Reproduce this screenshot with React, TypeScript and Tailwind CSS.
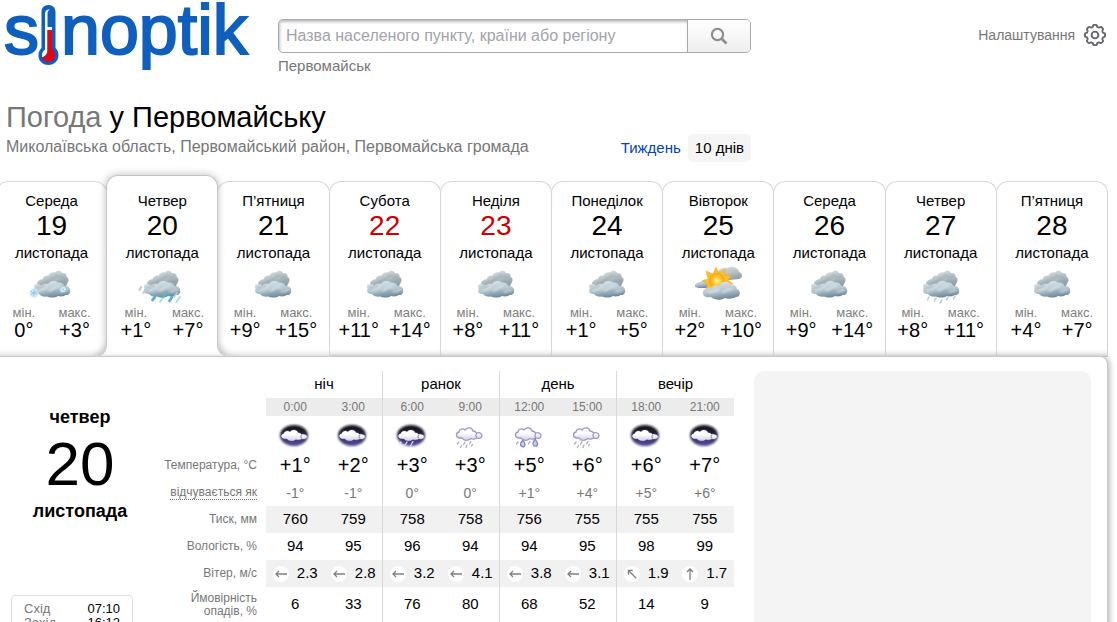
import type { ReactNode } from "react";
import { clsx } from "clsx";

type DayIconKind = "cloudy" | "snow" | "rain" | "drizzle" | "sun";
type HourIconKind = "night" | "night-rain" | "rain" | "heavy-rain";

const days: {
  name: string;
  date: number;
  icon: DayIconKind;
  min: string;
  max: string;
  weekend?: boolean;
}[] = [
  { name: "Середа", date: 19, icon: "snow", min: "0°", max: "+3°" },
  { name: "Четвер", date: 20, icon: "rain", min: "+1°", max: "+7°" },
  { name: "П’ятниця", date: 21, icon: "cloudy", min: "+9°", max: "+15°" },
  { name: "Субота", date: 22, icon: "cloudy", min: "+11°", max: "+14°", weekend: true },
  { name: "Неділя", date: 23, icon: "cloudy", min: "+8°", max: "+11°", weekend: true },
  { name: "Понеділок", date: 24, icon: "cloudy", min: "+1°", max: "+5°" },
  { name: "Вівторок", date: 25, icon: "sun", min: "+2°", max: "+10°" },
  { name: "Середа", date: 26, icon: "cloudy", min: "+9°", max: "+14°" },
  { name: "Четвер", date: 27, icon: "drizzle", min: "+8°", max: "+11°" },
  { name: "П’ятниця", date: 28, icon: "cloudy", min: "+4°", max: "+7°" },
];

const periods = ["ніч", "ранок", "день", "вечір"];

const hours: {
  time: string;
  icon: HourIconKind;
  temp: string;
  feels: string;
  pressure: number;
  humidity: number;
  wind: string;
  angle: number;
  chance: number;
}[] = [
  { time: "0:00", icon: "night", temp: "+1°", feels: "-1°", pressure: 760, humidity: 94, wind: "2.3", angle: 0, chance: 6 },
  { time: "3:00", icon: "night", temp: "+2°", feels: "-1°", pressure: 759, humidity: 95, wind: "2.8", angle: 0, chance: 33 },
  { time: "6:00", icon: "night-rain", temp: "+3°", feels: "0°", pressure: 758, humidity: 96, wind: "3.2", angle: 0, chance: 76 },
  { time: "9:00", icon: "rain", temp: "+3°", feels: "0°", pressure: 758, humidity: 94, wind: "4.1", angle: 0, chance: 80 },
  { time: "12:00", icon: "heavy-rain", temp: "+5°", feels: "+1°", pressure: 756, humidity: 94, wind: "3.8", angle: 0, chance: 68 },
  { time: "15:00", icon: "rain", temp: "+6°", feels: "+4°", pressure: 755, humidity: 95, wind: "3.1", angle: 0, chance: 52 },
  { time: "18:00", icon: "night", temp: "+6°", feels: "+5°", pressure: 755, humidity: 98, wind: "1.9", angle: 45, chance: 14 },
  { time: "21:00", icon: "night", temp: "+7°", feels: "+6°", pressure: 755, humidity: 99, wind: "1.7", angle: 90, chance: 9 },
];

// Gradients shared by all weather icons
function IconDefs() {
  return (
    <svg width="0" height="0" className="absolute" aria-hidden="true">
      <defs>
        <linearGradient id="cloudBack" x1="0" y1="0" x2="0.4" y2="1">
          <stop offset="0" stopColor="#dde4e5" />
          <stop offset="0.5" stopColor="#bac6ca" />
          <stop offset="1" stopColor="#8fa0a9" />
        </linearGradient>
        <linearGradient id="cloudFront" x1="0.2" y1="0" x2="0.5" y2="1">
          <stop offset="0" stopColor="#dfe7ea" />
          <stop offset="0.55" stopColor="#b6c6cf" />
          <stop offset="1" stopColor="#6b8699" />
        </linearGradient>
        <radialGradient id="sunFill">
          <stop offset="0" stopColor="#fff3a0" />
          <stop offset="0.6" stopColor="#fdc32a" />
          <stop offset="1" stopColor="#f3a418" />
        </radialGradient>
        <linearGradient id="nightSky" x1="0" y1="0" x2="0" y2="1">
          <stop offset="0" stopColor="#101014" />
          <stop offset="0.4" stopColor="#232138" />
          <stop offset="1" stopColor="#5850a4" />
        </linearGradient>
        <linearGradient id="smallCloud" x1="0" y1="0" x2="0" y2="1">
          <stop offset="0.4" stopColor="#ffffff" />
          <stop offset="1" stopColor="#d3d0e6" />
        </linearGradient>
        <filter id="soft" x="-20%" y="-20%" width="140%" height="140%">
          <feGaussianBlur stdDeviation="1.3" />
        </filter>
        <filter id="softer" x="-20%" y="-20%" width="140%" height="140%">
          <feGaussianBlur stdDeviation="0.8" />
        </filter>
      </defs>
    </svg>
  );
}

function Clouds() {
  return (
    <g>
      <path
        d="M9 18.500C9 15 12 13.500 15 13C15 10.500 18 9 20.500 9.500C22 6.500 25 6 27 6.500C29 4 33 4.500 34 7C37 6.500 39 8.500 38.500 10.500C41 12 41 15 39.500 17L38 20L12 22C10 22 8.500 20.500 9 18.500Z"
        fill="url(#cloudBack)"
      />
      <path
        d="M14 18C19 17 22 12 28 11M27 9C30 10.500 34 10.500 37 11M31 15C35 16 37 16 39 14"
        fill="none"
        stroke="#81949e"
        strokeWidth="1.500"
        opacity="0.500"
        filter="url(#softer)"
      />
      <path
        d="M6 19C8 17.500 11 18 13 19.500C15 17.500 18 17.500 20 18C22 14.500 27 14 30 16.500C33 16 36 18 36.500 20C40 19.500 42 21.500 42 24C43 27 40.500 29.500 37.500 29C35 31 31.500 30.500 30 30C27 32 22 32 19 30.500C16 31 12 30 11 28C8 28 6 27 6 25C7 23 6 21 6 19Z"
        fill="url(#cloudFront)"
      />
      <path
        d="M10 25C14 24 16 21 20 21M21 25C25 24 27 20 32 20M32 26C35 26 37 24 40 24"
        fill="none"
        stroke="#f4f8fa"
        strokeWidth="2"
        opacity="0.450"
        filter="url(#softer)"
      />
      <path
        d="M8 22C12 22 14 20 17 20M18 28C23 29 26 27 29 24"
        fill="none"
        stroke="#7f95a3"
        strokeWidth="1.400"
        opacity="0.450"
        filter="url(#softer)"
      />
    </g>
  );
}

function Sun() {
  return (
    <g>
      <path
        d="M23 8C24 3 28 1 33 2C38 -1 45 2 45 6C49 7 49 12 45 13L26 15Z"
        fill="url(#cloudBack)"
      />
      <path d="M1 19C2 16 6 17 9 14C13 12 17 14 20 18L16 22H6C3 22 0 21 1 19Z" fill="url(#cloudFront)" />
      <path
        d="M22 1L25 7L31 3L31 10L38 9L34 14L39 18L33 19L33 26L27 22L22 28L19 22L11 25L14 18L8 15L14 13L12 5L19 8Z"
        fill="#fbbf2a"
        stroke="#f2ab1c"
        strokeWidth="0.500"
      />
      <circle cx="23" cy="15" r="8" fill="url(#sunFill)" />
      <path
        d="M9 26C9 22 14 22 17 22C18 19 23 19 25 20C27 15 34 14 37 19C40 18 43 21 43 23C47 24 47 31 42 31C38 33 34 33 31 32C27 35 20 34 17 31C12 32 8 30 9 26Z"
        fill="url(#cloudFront)"
      />
      <path
        d="M14 26C18 27 21 24 25 24M28 27C32 26 34 22 38 23"
        fill="none"
        stroke="#fff"
        strokeWidth="1.800"
        opacity="0.500"
        filter="url(#softer)"
      />
    </g>
  );
}

function DayIcon({ kind }: { kind: DayIconKind }) {
  return (
    <svg viewBox="0 -1 48 40" width="48" height="40" className="mx-auto block overflow-visible" aria-hidden="true">
      {kind === "sun" ? <Sun /> : <Clouds />}
      {kind === "snow" && (
        <g stroke="#8cc9ea" strokeWidth="1" strokeLinecap="round">
          <circle cx="6" cy="27" r="4.500" fill="#cdebf8" stroke="none" opacity="0.900" />
          <path d="M6 23.500V30.500M3 25.500L9 28.500M3 28.500L9 25.500" />
          <circle cx="35" cy="23.500" r="2.600" fill="#eefaff" stroke="none" opacity="0.900" />
          <path d="M35 22V25M33.500 23L36.500 24.500" strokeWidth="0.800" />
        </g>
      )}
      {kind === "rain" && (
        <g strokeLinecap="round" fill="none">
          <path d="M3 21L1.500 24M7 24L5.500 27" stroke="#bccbd6" strokeWidth="2" />
          <path d="M28 27L25 31M17 31L14.500 34M34 31L31.500 35" stroke="#52b6d5" strokeWidth="2.800" />
          <path d="M42 31L38.500 36M24 33L22 36M39 27L36 31" stroke="#a6d8e8" strokeWidth="1.800" />
        </g>
      )}
      {kind === "drizzle" && (
        <g strokeLinecap="round" fill="none" stroke="#b7cbd6" strokeWidth="1.500">
          <path d="M12 31L10.500 34M19 32L17.500 35M31 31L29.500 34M38 30L36.500 33M25 34L23 37" />
        </g>
      )}
    </svg>
  );
}

function HourIcon({ kind }: { kind: HourIconKind }) {
  const night = kind === "night" || kind === "night-rain";
  return (
    <svg viewBox="0 -2 34 28" width="34" height="28" className="mx-auto block overflow-visible" aria-hidden="true">
      {night && <ellipse cx="16" cy="13.500" rx="14" ry="10.500" fill="url(#nightSky)" filter="url(#soft)" />}
      <path
        d="M7 16C3 16 2 11 6 10C6 7 10 6 12 8C14 5 19 5 20 9C22 9 23 10 23.500 11C25 10 29 11 29 13.500C29 16 26 17 24 16C22 17 20 18 18 16.500C15 19 11 19 9 16Z"
        fill="url(#smallCloud)"
        stroke={night ? "#e4e3f1" : "#9d98c6"}
        strokeWidth={night ? 0.3 : 1.3}
        transform={night ? "translate(0 3) scale(1 0.86)" : undefined}
      />
      <path
        d="M24 11.500C22.500 12.500 22.500 14.500 24 15.500"
        fill="none"
        stroke="#9691bb"
        strokeWidth="1.100"
        transform={night ? "translate(0 3) scale(1 0.86)" : undefined}
      />
      {kind !== "night" && (
        <g fill="none" stroke={night ? "#e0dfff" : "#aeabc0"} strokeWidth="1.300" strokeLinecap="round">
          <path d="M6 20L4.500 22M12 20L10.500 22.500M18 19.500L16.500 22" />
          {kind === "night-rain" && <path d="M9 23L8 25M16 23L15 25" />}
          {kind === "rain" && <path d="M8.500 23.500L7.500 25.500M14 23L13 25.500M19.500 22.500L18.500 24" />}
        </g>
      )}
      {kind === "heavy-rain" && (
        <g fill="#c3cdf7" stroke="#7f84c6" strokeWidth="1.200">
          <path d="M11 18C9.500 20 8 21 8.500 23C9.500 25.500 13 25.500 13 22.500C13 20.500 11 20 11 18Z" />
          <path d="M23.500 17C21.500 19 20.500 20.500 21 22.500C22 25 26 24.500 25.500 21.500C25.500 20 23.500 19 23.500 17Z" />
        </g>
      )}
    </svg>
  );
}

function Logo() {
  return (
    <a href="#" aria-label="sinoptik" className="block">
      <svg viewBox="0 0 250 72" width="250" height="72" className="overflow-visible" aria-hidden="true">
        <g
          fill="#0f5fbe"
          stroke="#0f5fbe"
          strokeWidth="2"
          fontSize="70"
          className="font-['Liberation_Sans',Arial,sans-serif]"
        >
          <text x="-2" y="54">s</text>
          <text x="55" y="54">noptik</text>
        </g>
        <path
          d="M42.500 5C47 5 49.500 8 49.500 12V48C55 53 53 65 42.500 65C32 65 30 53 35.500 48V12C35.500 8 38 5 42.500 5Z"
          fill="#0f5fbe"
        />
        <path
          d="M39 14C39 10.500 41 9 44 9.500C42 10.500 41.500 12 41.500 14V50C41.500 54 39.500 56.500 36 57C35.500 53.500 37 51 39 49.500Z"
          fill="#ffffff"
        />
        <path d="M41 27H46V30H41Z" fill="#ffffff" />
        <path
          d="M41.500 30H46V49C51.500 53 49.500 62 42.500 62C39.500 62 37 60 36 57.500C39.500 57 41.500 54 41.500 50Z"
          fill="#e10613"
        />
      </svg>
    </a>
  );
}

function gearPath() {
  const points: string[] = [];
  for (let i = 0; i < 160; i++) {
    const a = (i / 160) * Math.PI * 2;
    const r = 9.2 + 0.95 * Math.tanh(2.4 * Math.cos(8 * a) + 0.3);
    points.push(`${(12 + r * Math.cos(a)).toFixed(2)} ${(12 + r * Math.sin(a)).toFixed(2)}`);
  }
  return `M${points.join("L")}Z`;
}

function Header() {
  return (
    <header className="flex items-start pl-[6px]">
      <div className="w-[272px] shrink-0">
        <Logo />
      </div>
      <div className="w-[473px]">
        <form className="mt-[19px] flex h-[34px] overflow-hidden rounded-[5px] border border-[#a9a9b0] bg-white">
          <input
            type="text"
            aria-label="Назва населеного пункту, країни або регіону"
            placeholder="Назва населеного пункту, країни або регіону"
            className="min-w-0 flex-1 px-[7px] text-base shadow-[inset_1px_2px_3px_#bbbbbb] outline-none placeholder:text-[#a3a3ab]"
          />
          <button
            type="submit"
            aria-label="Пошук"
            className="flex w-[63px] items-center justify-center border-l border-[#a9a9b0] bg-linear-to-b from-white to-[#efefef]"
          >
            <svg viewBox="0 0 18 18" width="18" height="18" fill="none" stroke="#8d8d8d" aria-hidden="true">
              <circle cx="7.500" cy="7.500" r="5.600" strokeWidth="2.200" />
              <path d="M11.500 11.500L16.500 16.500" strokeWidth="2.600" />
            </svg>
          </button>
        </form>
        <a href="#" className="mt-1 inline-block text-[15px] leading-[18px] text-[#777777]">
          Первомайськ
        </a>
      </div>
      <button type="button" className="mt-[23px] mr-[10px] ml-auto flex items-center gap-2 text-sm leading-6 text-[#777777]">
        Налаштування
        <svg viewBox="0 0 24 24" width="24" height="24" fill="none" stroke="#66666b" strokeWidth="1.900" aria-hidden="true">
          <path d={gearPath()} />
          <circle cx="12" cy="12" r="3.400" />
        </svg>
      </button>
    </header>
  );
}

function DayTabs() {
  return (
    <ul className="mt-3 mr-[9px] -ml-1 grid grid-cols-10 items-end">
      {days.map((day, i) => {
        const active = i === 1;
        return (
          <li
            key={day.date}
            className={clsx(
              "relative",
              active ? "z-20 -ml-px bg-transparent" : "rounded-t-xl border border-[#d6d6d6] bg-white",
              !active && i !== 0 && "-ml-px",
              !active && "border-b-[#c8c8c8]",
              i === 0 && "z-30 rounded-br-xl border-r-[#c8c8c8] shadow-[inset_-5px_-5px_7px_-5px_#bbbbbb]",
              i === 2 && "z-30 rounded-bl-xl border-l-[#c8c8c8] shadow-[inset_5px_-5px_7px_-5px_#bbbbbb]",
              i > 2 && "shadow-[inset_0_-6px_7px_-6px_#bbbbbb]",
            )}
          >
            {active && (
              <>
                <span className="absolute -inset-x-3 -bottom-px h-px bg-white" />
                <span className="absolute inset-x-0 top-0 h-28 rounded-t-xl border border-b-0 border-[#c4c4c4] bg-white shadow-[0_0_8px_#bbbbbb] [clip-path:inset(-12px_-12px_0_-12px)]" />
              </>
            )}
            <a
              href="#"
              className={clsx("relative block px-1 text-center", active ? "pt-4 pb-[18px]" : "pt-[9px] pb-[17px]")}
            >
              <p className="text-[15px] leading-5">{day.name}</p>
              <p className={clsx("text-[28px] leading-[30px]", day.weekend && "text-[#cc0000]")}>{day.date}</p>
              <p className="text-[15px] leading-6">листопада</p>
              <DayIcon kind={day.icon} />
              <div className="flex justify-around">
                <div>
                  <p className="text-[13px] leading-4 text-[#808080]">мін.</p>
                  <p className="text-xl leading-[18px]">{day.min}</p>
                </div>
                <div>
                  <p className="text-[13px] leading-4 text-[#808080]">макс.</p>
                  <p className="text-xl leading-[18px]">{day.max}</p>
                </div>
              </div>
            </a>
          </li>
        );
      })}
    </ul>
  );
}

function Row({
  label,
  className,
  cell,
  shaded,
}: {
  label: ReactNode;
  className: string;
  cell: (hour: (typeof hours)[number]) => ReactNode;
  shaded?: boolean;
}) {
  return (
    <tr className={className}>
      <th scope="row" className="pr-[9px] text-right text-xs leading-[13px] font-normal text-[#777777]">
        {label}
      </th>
      {hours.map((hour, i) => (
        <td
          key={hour.time}
          className={clsx("p-0", i % 2 === 1 && i < 7 && "border-r border-[#d9d9d9]", shaded && "bg-[#f1f1f1]")}
        >
          {cell(hour)}
        </td>
      ))}
    </tr>
  );
}

function HourlyTable() {
  return (
    <table className="w-[574px] shrink-0 table-fixed border-separate border-spacing-0 text-center text-[15px]">
      <colgroup>
        <col className="w-[106px]" />
        <col span={8} />
      </colgroup>
      <thead>
        <tr className="h-[27px]">
          <td />
          {periods.map((period, i) => (
            <th
              key={period}
              colSpan={2}
              scope="colgroup"
              className={clsx("p-0 font-normal", i < 3 && "border-r border-[#d9d9d9]")}
            >
              {period}
            </th>
          ))}
        </tr>
        <tr className="h-[18px] text-xs leading-[18px] text-[#777777]">
          <td />
          {hours.map((hour, i) => (
            <th
              key={hour.time}
              scope="col"
              className={clsx("bg-[#ececec] p-0 font-normal", i % 2 === 1 && i < 7 && "border-r border-[#d9d9d9]")}
            >
              {hour.time}
            </th>
          ))}
        </tr>
      </thead>
      <tbody>
        <Row label="" className="h-[35px]" cell={(hour) => <HourIcon kind={hour.icon} />} />
        <Row label="Температура, °C" className="h-[27px] text-xl" cell={(hour) => hour.temp} />
        <Row
          label={<span className="border-b border-dotted border-[#777777]">відчувається як</span>}
          className="h-[27px] text-sm text-[#777777]"
          cell={(hour) => hour.feels}
        />
        <Row label="Тиск, мм" className="h-[27px]" shaded cell={(hour) => hour.pressure} />
        <Row label="Вологість, %" className="h-[27px]" cell={(hour) => hour.humidity} />
        <Row
          label="Вітер, м/с"
          className="h-[27px]"
          shaded
          cell={(hour) => (
            <div className="flex items-center justify-center gap-2">
              <svg viewBox="0 0 16 16" width="16" height="16" fill="none" stroke="#808080" aria-hidden="true">
                <circle cx="8" cy="8" r="8" fill="#ffffff" stroke="none" />
                <g style={{ transform: `rotate(${hour.angle}deg)`, transformOrigin: "8px 8px" }}>
                  <path d="M14 8H3M6 5L3 8L6 11" strokeWidth="1.300" />
                </g>
              </svg>
              {hour.wind}
            </div>
          )}
        />
        <Row
          label={
            <>
              Ймовірність
              <br />
              опадів, %
            </>
          }
          className="h-[35px]"
          cell={(hour) => hour.chance}
        />
        <Row label="" className="h-6" cell={() => null} />
      </tbody>
    </table>
  );
}

export default function App() {
  return (
    <div className="flex h-screen flex-col overflow-hidden bg-white font-['Liberation_Sans',Arial,sans-serif] text-black">
      <IconDefs />
      <Header />
      <div className="mt-[21px] flex w-[751px] items-end justify-between pl-[6px]">
        <div>
          <h1 className="text-[29px] leading-9">
            <span className="text-[#777777]">Погода</span> у Первомайську
          </h1>
          <p className="pb-1 text-base leading-6 text-[#777777]">
            Миколаївська область, Первомайський район, Первомайська громада
          </p>
        </div>
        <nav className="mb-px flex items-center gap-[7px] text-[15px] leading-7">
          <a href="#" className="text-[#0044bb]">
            Тиждень
          </a>
          <a href="#" className="rounded-[5px] bg-[#f5f5f5] px-[7px]">
            10 днів
          </a>
        </nav>
      </div>
      <DayTabs />
      <main className="relative z-10 mr-[9px] -mt-px flex flex-1 items-stretch rounded-tr-lg border-t border-r border-[#c8c8c8] bg-white pt-[14px] shadow-[3px_0_6px_-2px_#aaaaaa]">
        <aside className="flex w-40 shrink-0 flex-col pl-[11px]">
          <div className="pt-8 pr-[11px] text-center font-bold">
            <p className="text-lg leading-7">четвер</p>
            <p className="text-[62px] leading-[66px] font-normal">20</p>
            <p className="text-lg leading-7">листопада</p>
          </div>
          <dl className="mt-[70px] grid w-[122px] grid-cols-[1fr_auto] rounded border border-[#dddddd] px-3 py-[6px] text-[13px] leading-[14px]">
            <dt className="text-[#777777]">Схід</dt>
            <dd>07:10</dd>
            <dt className="text-[#777777]">Захід</dt>
            <dd>16:12</dd>
          </dl>
        </aside>
        <HourlyTable />
        <div className="mr-4 ml-5 flex-1 rounded-t-[10px] bg-[#f4f4f4]" />
      </main>
    </div>
  );
}
